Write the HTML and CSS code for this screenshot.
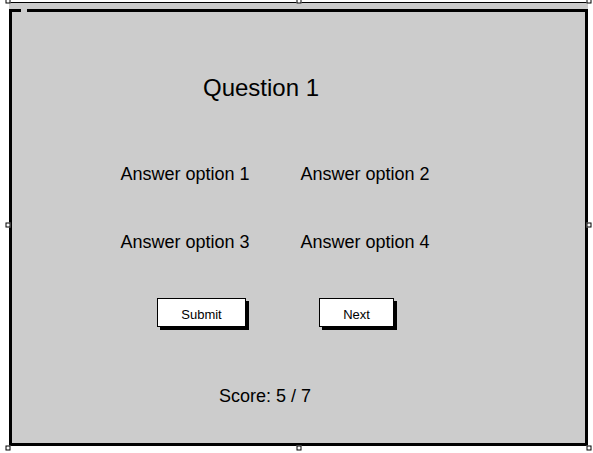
FILE: index.html
```html
<!DOCTYPE html>
<html>
<head>
<meta charset="utf-8">
<link rel="stylesheet" href="styles.css">
</head>
<body>
<div class="frame">
  <div class="panel">
    <span class="border-gap"></span>
    <h1 class="question">Question 1</h1>
    <div class="answers">
      <div class="answer">Answer option 1</div>
      <div class="answer">Answer option 2</div>
      <div class="answer">Answer option 3</div>
      <div class="answer">Answer option 4</div>
    </div>
    <div class="buttons">
      <button class="btn btn-submit">Submit</button>
      <button class="btn btn-next">Next</button>
    </div>
    <div class="score">Score: 5 / 7</div>
  </div>
</div>
<div class="selection">
  <span class="handle h-tl"></span>
  <span class="handle h-tc"></span>
  <span class="handle h-tr"></span>
  <span class="handle h-ml"></span>
  <span class="handle h-mr"></span>
  <span class="handle h-bl"></span>
  <span class="handle h-bc"></span>
  <span class="handle h-br"></span>
</div>
</body>
</html>
```
FILE: styles.css
```css
html, body {
  margin: 0;
  padding: 0;
  background: #ffffff;
  overflow: hidden;
}
body {
  width: 593px;
  height: 453px;
  position: relative;
  font-family: "Liberation Sans", Arial, sans-serif;
  color: #000;
}
.frame {
  margin: 2px 0 0 9px;
  width: 579px;
  border-top: 1px solid #000;
  background: #cccccc;
  padding-top: 6px;
}
.panel {
  position: relative;
  box-sizing: border-box;
  width: 579px;
  height: 437px;
  border: 3px solid #000;
  background: #cccccc;
  display: flex;
  flex-direction: column;
}
.border-gap {
  position: absolute;
  top: -3px;
  left: 9px;
  width: 6px;
  height: 3px;
  background: #cccccc;
}
.question {
  margin: 62px 0 0 191px;
  font-size: 24px;
  line-height: 28px;
  font-weight: normal;
}
.answers {
  margin: 62px 0 0 83px;
  display: grid;
  grid-template-columns: 180px 180px;
  row-gap: 47px;
}
.answer {
  text-align: center;
  font-size: 18px;
  line-height: 21px;
}
.buttons {
  margin: 45px 0 0 145px;
  display: flex;
  gap: 73px;
}
.btn {
  box-sizing: border-box;
  height: 29px;
  padding: 3px 0 0;
  border: 1.5px solid #000;
  background: #fff;
  box-shadow: 3px 3px 0 #000;
  font-family: "Liberation Sans", Arial, sans-serif;
  font-size: 13px;
  color: #000;
}
.btn-submit { width: 89px; }
.btn-next { width: 75px; }
.score {
  margin: 59px 0 0 207px;
  font-size: 18px;
  line-height: 21px;
}
.selection {
  position: absolute;
  left: 8px;
  top: 1px;
  width: 581px;
  height: 447px;
  pointer-events: none;
}
.handle {
  position: absolute;
  box-sizing: border-box;
  width: 5px;
  height: 5px;
  border: 1px solid #000;
  background: #fff;
  transform: translate(-50%, -50%);
}
.h-tl { left: 0; top: 0; }
.h-tc { left: 50%; top: 0; }
.h-tr { left: 100%; top: 0; }
.h-ml { left: 0; top: 50%; }
.h-mr { left: 100%; top: 50%; }
.h-bl { left: 0; top: 100%; }
.h-bc { left: 50%; top: 100%; }
.h-br { left: 100%; top: 100%; }
```
